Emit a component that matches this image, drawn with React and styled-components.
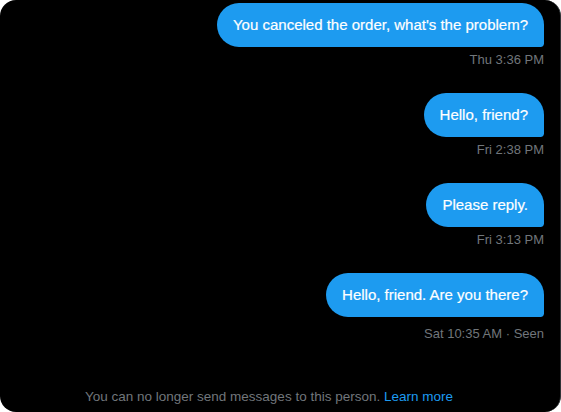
import styled, { createGlobalStyle } from "styled-components";

const GlobalStyle = createGlobalStyle`
  html, body {
    margin: 0;
    padding: 0;
    background: #ffffff;
  }
  body {
    font-family: "Liberation Sans", Arial, sans-serif;
  }
`;

const Panel = styled.div`
  box-sizing: border-box;
  width: 561px;
  height: 412px;
  background: #000;
  border-radius: 16px;
  border-right: 1px solid #2f3336;
  display: flex;
  flex-direction: column;
  overflow: hidden;
`;

const Thread = styled.div`
  flex: 1;
  display: flex;
  flex-direction: column;
  gap: 25px;
  padding: 3px 16px 0 16px;
`;

const Group = styled.div`
  display: flex;
  flex-direction: column;
  align-items: flex-end;
  gap: 5px;
`;

const Bubble = styled.div`
  background: #1d9bf0;
  color: #fff;
  font-size: 15px;
  line-height: 20px;
  padding: 12px 16px;
  border-radius: 24px 24px 4px 24px;
  -webkit-text-stroke: 0.2px #fff;
`;

const Meta = styled.div`
  color: #71767b;
  font-size: 13px;
  line-height: 16px;
  margin-top: ${(p) => (p.$seen ? "4px" : "0")};
`;

const Footer = styled.div`
  color: #71767b;
  font-size: 13.5px;
  line-height: 18px;
  text-align: center;
  padding: 0 38px 6px 16px;
`;

const Link = styled.a`
  color: #1d9bf0;
  text-decoration: none;
`;

const messages = [
  { text: "You canceled the order, what's the problem?", meta: "Thu 3:36 PM" },
  { text: "Hello, friend?", meta: "Fri 2:38 PM" },
  { text: "Please reply.", meta: "Fri 3:13 PM" },
  { text: "Hello, friend. Are you there?", meta: "Sat 10:35 AM · Seen", seen: true },
];

export default function App() {
  return (
    <>
      <GlobalStyle />
      <Panel>
        <Thread>
          {messages.map((m) => (
            <Group key={m.meta}>
              <Bubble>{m.text}</Bubble>
              <Meta $seen={m.seen}>{m.meta}</Meta>
            </Group>
          ))}
        </Thread>
        <Footer>
          You can no longer send messages to this person.{" "}
          <Link href="#">Learn more</Link>
        </Footer>
      </Panel>
    </>
  );
}
